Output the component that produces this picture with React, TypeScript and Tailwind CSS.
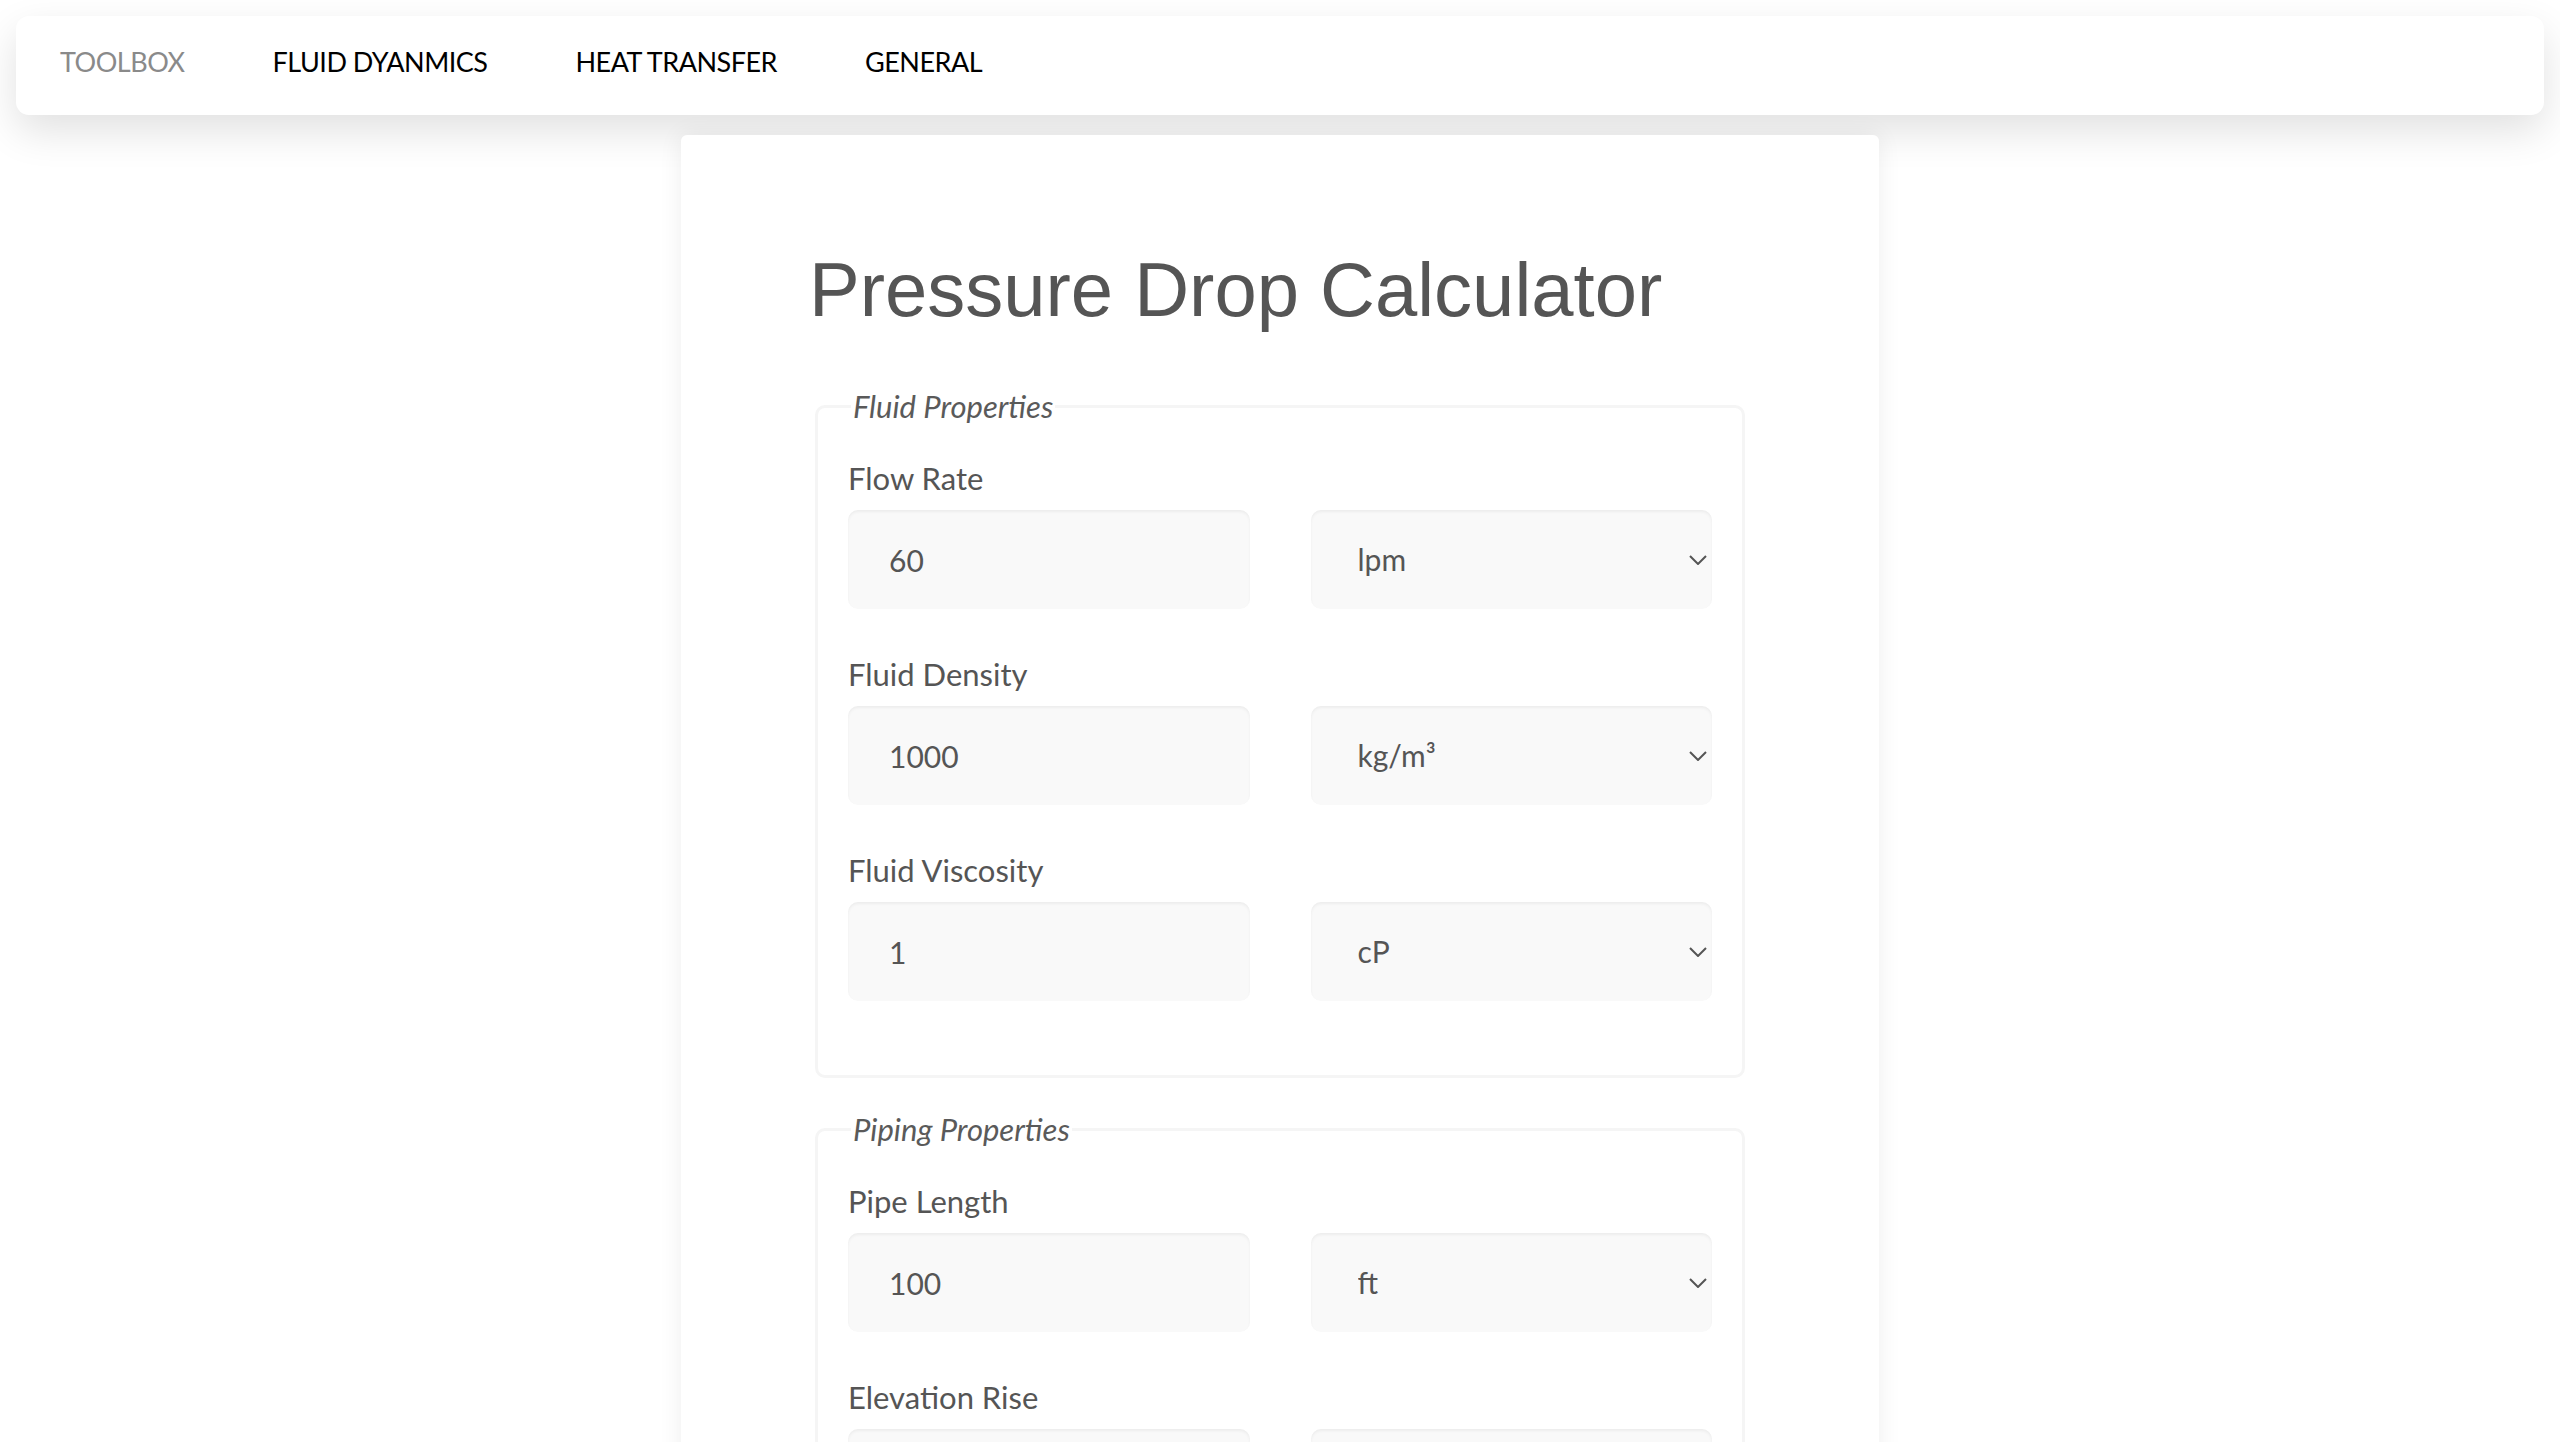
const navItems = ["TOOLBOX", "FLUID DYANMICS", "HEAT TRANSFER", "GENERAL"];

type Row = { label: string; value: string; unit: string; units: string[] };

const fluid: Row[] = [
  { label: "Flow Rate", value: "60", unit: "lpm", units: ["lpm", "gpm", "m³/h"] },
  { label: "Fluid Density", value: "1000", unit: "kg/m³", units: ["kg/m³", "lb/ft³"] },
  { label: "Fluid Viscosity", value: "1", unit: "cP", units: ["cP", "Pa·s"] },
];

const piping: Row[] = [
  { label: "Pipe Length", value: "100", unit: "ft", units: ["ft", "m"] },
  { label: "Elevation Rise", value: "0", unit: "ft", units: ["ft", "m"] },
];

const Chevron = () => (
  <svg
    className="pointer-events-none absolute right-[5px] top-1/2 -translate-y-1/2"
    width="18"
    height="10"
    viewBox="0 0 18 10"
    fill="none"
  >
    <polyline points="1,1 9,9 17,1" stroke="#555" strokeWidth="2" />
  </svg>
);

const Field = ({ row, first }: { row: Row; first: boolean }) => (
  <div className={first ? "" : "mt-[45px]"}>
    <label className="block text-[31px] leading-[40px] text-[#555]">{row.label}</label>
    <div className="mt-[12px] grid grid-cols-2 gap-x-[61px]">
      <input
        defaultValue={row.value}
        className="h-[99px] w-full rounded-[10px] bg-[#f9f9f9] pl-[41px] text-[30px] text-[#555] outline-none shadow-[inset_0_2px_3px_rgba(0,0,0,0.05)]"
      />
      <div className="relative">
        <select
          defaultValue={row.unit}
          className="h-[99px] w-full appearance-none rounded-[10px] bg-[#f9f9f9] pl-[47px] text-[30px] text-[#555] outline-none shadow-[inset_0_2px_3px_rgba(0,0,0,0.05)]"
        >
          {row.units.map((u) => (
            <option key={u}>{u}</option>
          ))}
        </select>
        <Chevron />
      </div>
    </div>
  </div>
);

const Group = ({ title, rows, className }: { title: string; rows: Row[]; className?: string }) => (
  <fieldset className={"rounded-[10px] border-[3px] border-[#f5f5f5] px-[30px] pb-[74px] pt-[34px] " + (className ?? "")}>
    <legend className="ml-[3px] px-[2px] text-[31px] italic leading-[36px] text-[#5a5a5a]">{title}</legend>
    {rows.map((r, i) => (
      <Field key={r.label} row={r} first={i === 0} />
    ))}
  </fieldset>
);

export default function App() {
  return (
    <div className="min-h-screen bg-white font-['Lato',sans-serif]">
      <div className="px-[16px] pt-[16px]">
        <nav className="flex h-[99px] rounded-[13px] bg-white pt-[26px] shadow-[0_16px_40px_rgba(0,0,0,0.12)]">
          {navItems.map((item, i) => (
            <a
              key={item}
              className={
                "px-[44px] text-[27px] leading-[40px] tracking-[-0.5px] " +
                (i === 0 ? "text-[#8a8a8a]" : "text-black")
              }
            >
              {item}
            </a>
          ))}
        </nav>
      </div>

      <main className="mx-auto mt-[20px] w-[1198px] rounded-t-[6px] bg-white px-[134px] pb-[120px] pt-[111px] shadow-[0_0_25px_rgba(0,0,0,0.07)]">
        <h1 className="-ml-[6px] mb-[54px] font-['Liberation_Sans',Arial,sans-serif] text-[76px] leading-[88px] text-[#555]">
          Pressure Drop Calculator
        </h1>
        <Group title="Fluid Properties" rows={fluid} />
        <Group title="Piping Properties" rows={piping} className="mt-[33px]" />
      </main>
    </div>
  );
}
